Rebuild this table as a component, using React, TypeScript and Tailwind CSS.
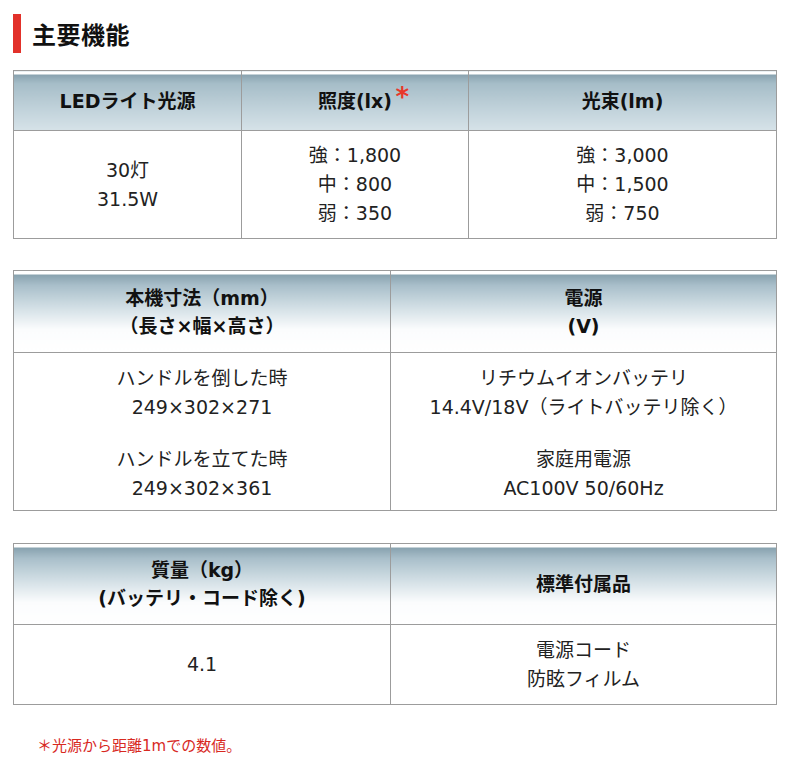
import React from "react";

const FONT = {
  fontFamily: '"DejaVu Sans", Verdana, "Noto Sans CJK JP", sans-serif',
};

const HEAD_SHORT =
  "bg-[linear-gradient(#fff_0px,#fff_3px,#87a1ae_3px,#a6bdc8_12px,#c3d4dc_40px,#d6e2e8_100%)]";
const HEAD_TALL =
  "bg-[linear-gradient(#fff_0px,#fff_3px,#87a1ae_3px,#a9bfca_14px,#d2dfe5_36px,#fbfcfd_58px,#fff_100%)]";

function Th({
  children,
  tall,
  className = "",
}: {
  children: React.ReactNode;
  tall?: boolean;
  className?: string;
}) {
  return (
    <th
      className={`border border-[#9c9c9c] p-0 text-center align-middle font-bold text-[19px] leading-[28px] text-[#111] ${
        tall ? HEAD_TALL : HEAD_SHORT
      } ${className}`}
    >
      {children}
    </th>
  );
}

function Td({ children }: { children: React.ReactNode }) {
  return (
    <td className="border border-[#9c9c9c] p-0 text-center align-middle text-[19px] leading-[29px] text-[#222]">
      {children}
    </td>
  );
}

export default function App() {
  return (
    <div className="bg-white w-[800px] h-[763px] pl-[13px] pt-[14px]" style={FONT}>
      {/* Title */}
      <div className="flex items-center gap-[11px] h-[39px]">
        <div className="w-[8px] h-[39px] bg-[#e2312a]" />
        <h2
          className="text-[24px] font-bold text-[#111] leading-none tracking-[0.5px]"
          style={{ fontFamily: '"Noto Sans CJK JP", sans-serif' }}
        >
          主要機能
        </h2>
      </div>

      {/* Table 1 */}
      <table className="mt-[17px] w-[763px] table-fixed border-collapse">
        <colgroup>
          <col className="w-[228px]" />
          <col className="w-[227px]" />
          <col className="w-[308px]" />
        </colgroup>
        <thead>
          <tr className="h-[60px]">
            <Th>LEDライト光源</Th>
            <Th>
              <span className="relative">
                照度(lx)
                <span className="absolute -right-[17px] -top-[6px] text-[26px] leading-none text-[#e8382b] font-bold">
                  *
                </span>
              </span>
            </Th>
            <Th>光束(lm)</Th>
          </tr>
        </thead>
        <tbody>
          <tr className="h-[108px]">
            <Td>
              30灯
              <br />
              31.5W
            </Td>
            <Td>
              強：1,800
              <br />
              中：800
              <br />
              弱：350
            </Td>
            <Td>
              強：3,000
              <br />
              中：1,500
              <br />
              弱：750
            </Td>
          </tr>
        </tbody>
      </table>

      {/* Table 2 */}
      <table className="mt-[31px] w-[763px] table-fixed border-collapse">
        <colgroup>
          <col className="w-[377px]" />
          <col className="w-[386px]" />
        </colgroup>
        <thead>
          <tr className="h-[82px]">
            <Th tall>
              本機寸法（mm）
              <br />
              （長さ×幅×高さ）
            </Th>
            <Th tall>
              電源
              <br />
              (V)
            </Th>
          </tr>
        </thead>
        <tbody>
          <tr className="h-[158px]">
            <Td>
              <div className="flex flex-col gap-[23px] pt-[3px]">
                <div>
                  ハンドルを倒した時
                  <br />
                  249×302×271
                </div>
                <div>
                  ハンドルを立てた時
                  <br />
                  249×302×361
                </div>
              </div>
            </Td>
            <Td>
              <div className="flex flex-col gap-[23px] pt-[3px]">
                <div>
                  リチウムイオンバッテリ
                  <br />
                  14.4V/18V（ライトバッテリ除く）
                </div>
                <div>
                  家庭用電源
                  <br />
                  AC100V 50/60Hz
                </div>
              </div>
            </Td>
          </tr>
        </tbody>
      </table>

      {/* Table 3 */}
      <table className="mt-[32px] w-[763px] table-fixed border-collapse">
        <colgroup>
          <col className="w-[377px]" />
          <col className="w-[386px]" />
        </colgroup>
        <thead>
          <tr className="h-[81px]">
            <Th tall>
              質量（kg）
              <br />
              (バッテリ・コード除く)
            </Th>
            <Th tall>標準付属品</Th>
          </tr>
        </thead>
        <tbody>
          <tr className="h-[80px]">
            <Td>4.1</Td>
            <Td>
              電源コード
              <br />
              防眩フィルム
            </Td>
          </tr>
        </tbody>
      </table>

      <p className="mt-[31px] pl-[24px] text-[15px] leading-[20px] text-[#d8291f]">
        ＊光源から距離1mでの数値。
      </p>
    </div>
  );
}
